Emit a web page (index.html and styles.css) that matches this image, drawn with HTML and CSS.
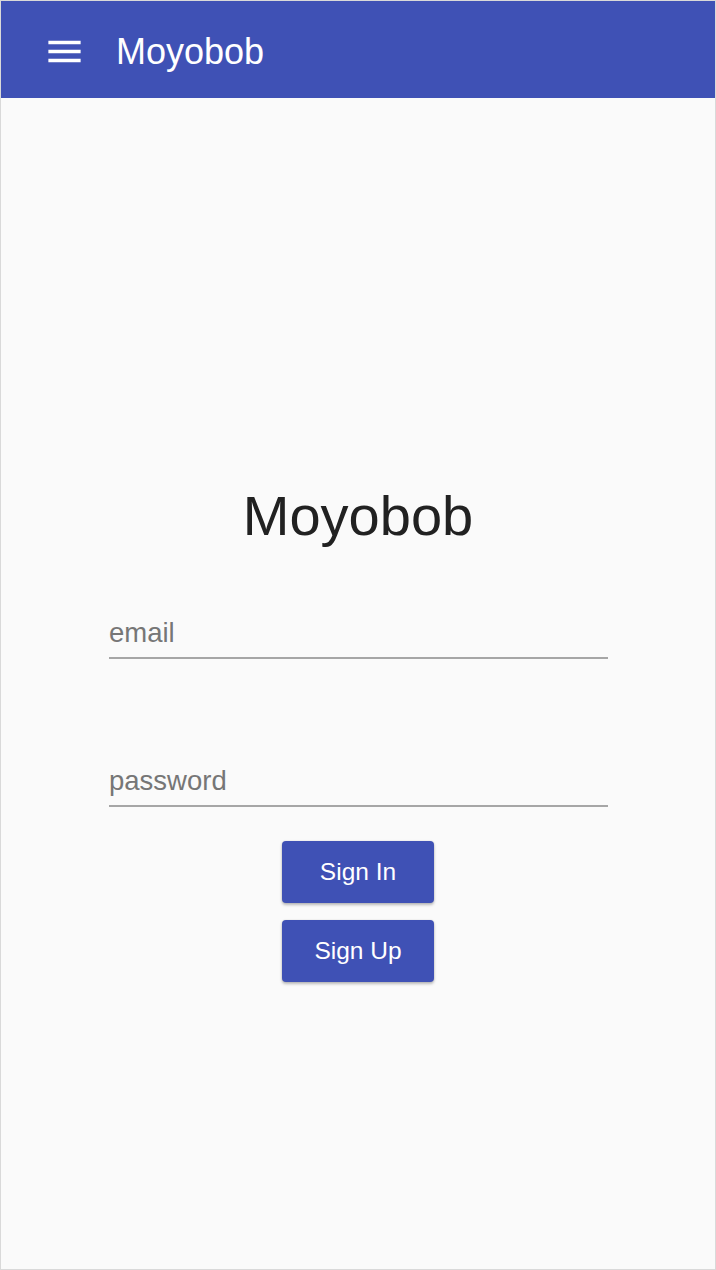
FILE: index.html
```html
<!DOCTYPE html>
<html lang="en">
<head>
<meta charset="utf-8">
<title>Moyobob</title>
<link rel="stylesheet" href="styles.css">
</head>
<body>
<div class="frame">
  <header class="app-bar">
    <button class="menu-btn" aria-label="Menu">
      <svg class="menu-icon" viewBox="0 0 24 24" width="43" height="43" aria-hidden="true">
        <path fill="#ffffff" d="M3 18h18v-2H3v2zm0-5h18v-2H3v2zm0-7v2h18V6H3z"/>
      </svg>
    </button>
    <span class="app-title">Moyobob</span>
  </header>
  <main class="content">
    <h1 class="heading">Moyobob</h1>
    <div class="field field-email"><span class="field-label">email</span></div>
    <div class="field field-password"><span class="field-label">password</span></div>
    <div class="actions">
      <button class="btn">Sign In</button>
      <button class="btn">Sign Up</button>
    </div>
  </main>
</div>
</body>
</html>
```
FILE: styles.css
```css
html, body {
  margin: 0;
  padding: 0;
  background: #ffffff;
}

.frame {
  width: 716px;
  height: 1270px;
  box-sizing: border-box;
  border: 1px solid #d9d9d9;
  background: #fafafa;
  font-family: "Liberation Sans", Arial, sans-serif;
  display: flex;
  flex-direction: column;
  overflow: hidden;
}

.app-bar {
  height: 97px;
  box-sizing: border-box;
  padding-top: 4px;
  background: #3f51b5;
  display: flex;
  align-items: center;
  flex-shrink: 0;
}

.menu-btn {
  margin: 0 0 0 42px;
  padding: 0;
  border: 0;
  background: transparent;
  width: 43px;
  height: 43px;
  display: flex;
}

.menu-icon {
  display: block;
}

.app-title {
  margin-left: 30px;
  color: #ffffff;
  font-size: 36px;
  line-height: 40px;
}

.content {
  display: flex;
  flex-direction: column;
  align-items: center;
  padding-top: 386px;
}

.heading {
  margin: 0;
  font-weight: normal;
  font-size: 56px;
  line-height: 64px;
  color: #212121;
}

.field {
  width: 499px;
  box-sizing: border-box;
  border-bottom: 2px solid #a6a6a6;
  padding-bottom: 7px;
  margin-left: 1px;
}

.field-email {
  margin-top: 68px;
}

.field-password {
  margin-top: 105px;
}

.field-label {
  display: block;
  font-size: 27.5px;
  line-height: 34px;
  color: #767676;
}

.actions {
  display: flex;
  flex-direction: column;
  gap: 17px;
  margin-top: 34px;
}

.btn {
  width: 152px;
  height: 62px;
  border: 0;
  border-radius: 4px;
  background: #3f51b5;
  color: #ffffff;
  font-family: "Liberation Sans", Arial, sans-serif;
  font-size: 24.5px;
  padding: 0;
  box-shadow: 0 2px 3px rgba(0, 0, 0, 0.26), 0 0 2px rgba(0, 0, 0, 0.12);
}
```
